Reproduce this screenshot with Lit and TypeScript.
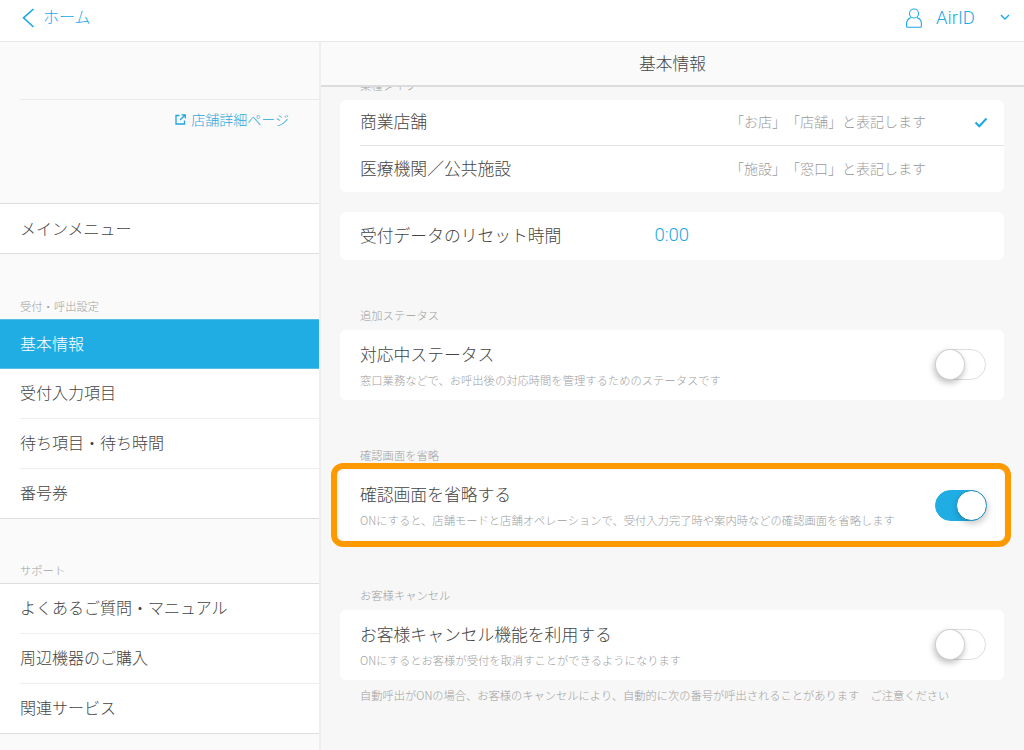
import { LitElement, html, css, svg } from "lit";
import { customElement, property } from "lit/decorators.js";

@customElement("app-switch")
class AppSwitch extends LitElement {
  @property({ type: Boolean }) on = false;
  static styles = css`
    :host { display: block; flex: none; margin-bottom: 2px; }
    :host([on]) { margin-bottom: 0; }
    .track {
      box-sizing: border-box; width: 51px; height: 31px; border-radius: 16px;
      border: 1px solid #dedede; background: #fff; position: relative;
    }
    .track.on { background: #1fade4; border-color: #1fade4; }
    .knob {
      position: absolute; left: -1px; top: -1px; box-sizing: border-box;
      width: 30px; height: 31px; border-radius: 50%; background: #fff;
      border: 1px solid #cfcfcf; box-shadow: -1px 3px 6px rgba(0,0,0,.25);
    }
    .on .knob { left: 20px; border-color: #1a8cba; width: 31px; box-shadow: 1px 3px 6px rgba(0,0,0,.2); }
  `;
  render() {
    return html`<div class="track ${this.on ? "on" : ""}"><div class="knob"></div></div>`;
  }
}

const back = svg`<svg width="13" height="20" viewBox="0 0 13 20" fill="none" stroke="#1ba9e6" stroke-width="1.6"><path d="M11.500 1 1.500 9.800 11.500 19"/></svg>`;
const user = svg`<svg width="16" height="20" viewBox="0 0 16 20" fill="none" stroke="#1ba9e6" stroke-width="1.100"><circle cx="8" cy="5.500" r="4.500"/><path d="M5 9.500C2.500 10.500 .6 12.500 .6 15.500v2.800c0 .6.400 1 1 1h12.800c.6 0 1-.4 1-1v-2.800c0-3-1.900-5-4.400-6"/></svg>`;
const chev = svg`<svg width="10" height="7" viewBox="0 0 10 7" fill="none" stroke="#1ba9e6" stroke-width="1.400"><path d="M1 1l4 4 4-4"/></svg>`;
const ext = svg`<svg width="11" height="11" viewBox="0 0 11 11" fill="none" stroke="#1fa5dd" stroke-width="1.300"><path d="M4.500 1.500H1v8.500h8.500V6.500M5 6l5-5M6.500 .8h3.800v3.800"/></svg>`;
const check = svg`<svg width="14" height="11" viewBox="0 0 14 11" fill="none" stroke="#1ba9e6" stroke-width="2"><path d="M1.500 5.500l3.800 3.800L12.500 1.500"/></svg>`;

@customElement("app-root")
class AppRoot extends LitElement {
  static styles = css`
    :host {
      display: block; width: 1024px; height: 750px; overflow: hidden; background: #f7f7f7;
      font-family: "Noto Sans CJK JP", "Liberation Sans", sans-serif; font-weight: 300;
      color: #444; text-spacing-trim: space-all;
    }
    .top {
      box-sizing: border-box; height: 42px; background: #fff; border-bottom: 1px solid #e8e8e8;
      display: flex; align-items: center; padding: 0 14px 6px 22px; color: #1ba9e6;
    }
    .home { display: flex; align-items: center; gap: 8px; font-size: 16px; flex: 1; }
    .home span { margin-bottom: 3px; }
    .home svg { display: block; }
    .user { display: flex; align-items: center; }
    .user svg { display: block; }
    .airid { font-family: Roboto, sans-serif; font-size: 18.500px; margin: 0 25px 0 14px; }
    .body { display: flex; height: 708px; }
    .side {
      box-sizing: border-box; width: 321px; flex: none; background: #fafafa;
      border-right: 2px solid #eeeeee;
    }
    .shop { box-sizing: border-box; height: 162px; padding: 57px 0 0 20px; border-bottom: 1px solid #dedede; }
    .link {
      border-top: 1px solid #ebebeb; height: 102px; box-sizing: border-box; padding: 11px 30px 0 0;
      display: flex; justify-content: flex-end; align-items: flex-start; gap: 5px;
      font-size: 14px; line-height: 17px; color: #2aa7dc;
    }
    .link svg { margin-top: 3px; }
    .group { background: #fff; border-bottom: 1px solid #dedede; }
    .group.b { border-top: 1px solid #dedede; }
    .item {
      box-sizing: border-box; height: 50px; display: flex; align-items: center;
      margin-left: 20px; font-size: 16px; border-bottom: 1px solid #eeeeee; padding-bottom: 3px;
    }
    .item:last-child { border-bottom: 0; height: 49px; }
    .item.first { height: 49px; border: 0; padding-bottom: 2px; }
    .active {
      box-sizing: border-box; height: 50px; background: #1fade4; color: #fff; padding: 0 0 3px 20px;
      display: flex; align-items: center; font-size: 16px;
      border-top: 1px solid #55bfe6; border-bottom: 1px solid #55bfe6;
    }
    .seclabel {
      box-sizing: border-box; margin-left: 20px; font-size: 11.300px; color: #a0a0a0; line-height: 16px;
    }
    .s1 { height: 65px; padding-top: 44px; }
    .s2 { height: 64px; padding-top: 43px; }
    .main { flex: 1; min-width: 0; display: flex; flex-direction: column; }
    .head {
      box-sizing: border-box; height: 45px; flex: none; background: #fafafa; border-bottom: 2px solid #dcdcdc;
      display: flex; align-items: center; justify-content: center; font-size: 16.800px; position: relative; z-index: 1;
      padding-bottom: 2px;
    }
    .content { flex: 1; overflow: hidden; padding: 0 20px 0 19px; }
    .lab { font-size: 11.300px; line-height: 16px; color: #a0a0a0; padding-left: 20px; }
    .lab.clip { margin-top: -10px; height: 16px; margin-bottom: 7px; }
    .card { background: #fff; border-radius: 6px; position: relative; }
    .opt { display: flex; align-items: center; height: 45px; margin-left: 20px; padding: 0 16px 3px 0; font-size: 16.800px; box-sizing: border-box; }
    .opt + .opt { border-top: 1px solid #e2e2e2; height: 47px; }
    .opt .hint { margin-left: auto; width: 244px; font-size: 14px; color: #9a9a9a; }
    .opt .mark { width: 14px; display: flex; margin-top: 3px; }
    .reset { margin-top: 20px; height: 48px; box-sizing: border-box; display: flex; align-items: center; padding: 0 0 2px 20px; font-size: 16.800px; }
    .reset span { margin-left: 93px; color: #1ba9e6; font-family: Roboto, sans-serif; font-size: 18.500px; }
    .sw {
      height: 70px; box-sizing: border-box; display: flex; align-items: center; justify-content: space-between;
      padding: 0 18px 0 20px;
    }
    .sw .txt { margin-top: 2px; }
    .sw .t { font-size: 16.800px; line-height: 24px; margin-top: -2px; }
    .sw .d { font-size: 11.300px; line-height: 16px; color: #a0a0a0; margin-top: 6px; }
    .g1 { margin-top: 47px; margin-bottom: 7px; }
    .g2 { margin-top: 47px; margin-bottom: 7px; }
    .hl::after {
      content: ""; position: absolute; inset: -7px -7px -7px -9px; border: 6px solid #ff9900; border-radius: 12px;
    }
    .note { font-size: 11.250px; line-height: 16px; color: #a0a0a0; padding: 7px 0 0 20px; }
  `;

  render() {
    return html`
      <div class="top">
        <div class="home">${back}<span>ホーム</span></div>
        <div class="user">${user}<span class="airid">AirID</span>${chev}</div>
      </div>
      <div class="body">
        <nav class="side">
          <div class="shop"><div class="link">${ext}<span>店舗詳細ページ</span></div></div>
          <div class="group"><div class="item first">メインメニュー</div></div>
          <div class="seclabel s1">受付・呼出設定</div>
          <div class="group">
            <div class="active">基本情報</div>
            <div class="item">受付入力項目</div>
            <div class="item">待ち項目・待ち時間</div>
            <div class="item">番号券</div>
          </div>
          <div class="seclabel s2">サポート</div>
          <div class="group b">
            <div class="item">よくあるご質問・マニュアル</div>
            <div class="item">周辺機器のご購入</div>
            <div class="item">関連サービス</div>
          </div>
        </nav>
        <main class="main">
          <div class="head">基本情報</div>
          <div class="content">
            <div class="lab clip">業種タイプ</div>
            <div class="card">
              <div class="opt">商業店舗<span class="hint">「お店」「店舗」と表記します</span><span class="mark">${check}</span></div>
              <div class="opt">医療機関／公共施設<span class="hint">「施設」「窓口」と表記します</span><span class="mark"></span></div>
            </div>
            <div class="card reset">受付データのリセット時間<span>0:00</span></div>
            <div class="lab g1">追加ステータス</div>
            <div class="card sw">
              <div class="txt"><div class="t">対応中ステータス</div><div class="d">窓口業務などで、お呼出後の対応時間を管理するためのステータスです</div></div>
              <app-switch></app-switch>
            </div>
            <div class="lab g2">確認画面を省略</div>
            <div class="card sw hl">
              <div class="txt"><div class="t">確認画面を省略する</div><div class="d">ONにすると、店舗モードと店舗オペレーションで、受付入力完了時や案内時などの確認画面を省略します</div></div>
              <app-switch on></app-switch>
            </div>
            <div class="lab g2">お客様キャンセル</div>
            <div class="card sw">
              <div class="txt"><div class="t">お客様キャンセル機能を利用する</div><div class="d">ONにするとお客様が受付を取消すことができるようになります</div></div>
              <app-switch></app-switch>
            </div>
            <div class="note">自動呼出がONの場合、お客様のキャンセルにより、自動的に次の番号が呼出されることがあります　ご注意ください</div>
          </div>
        </main>
      </div>
    `;
  }
}
